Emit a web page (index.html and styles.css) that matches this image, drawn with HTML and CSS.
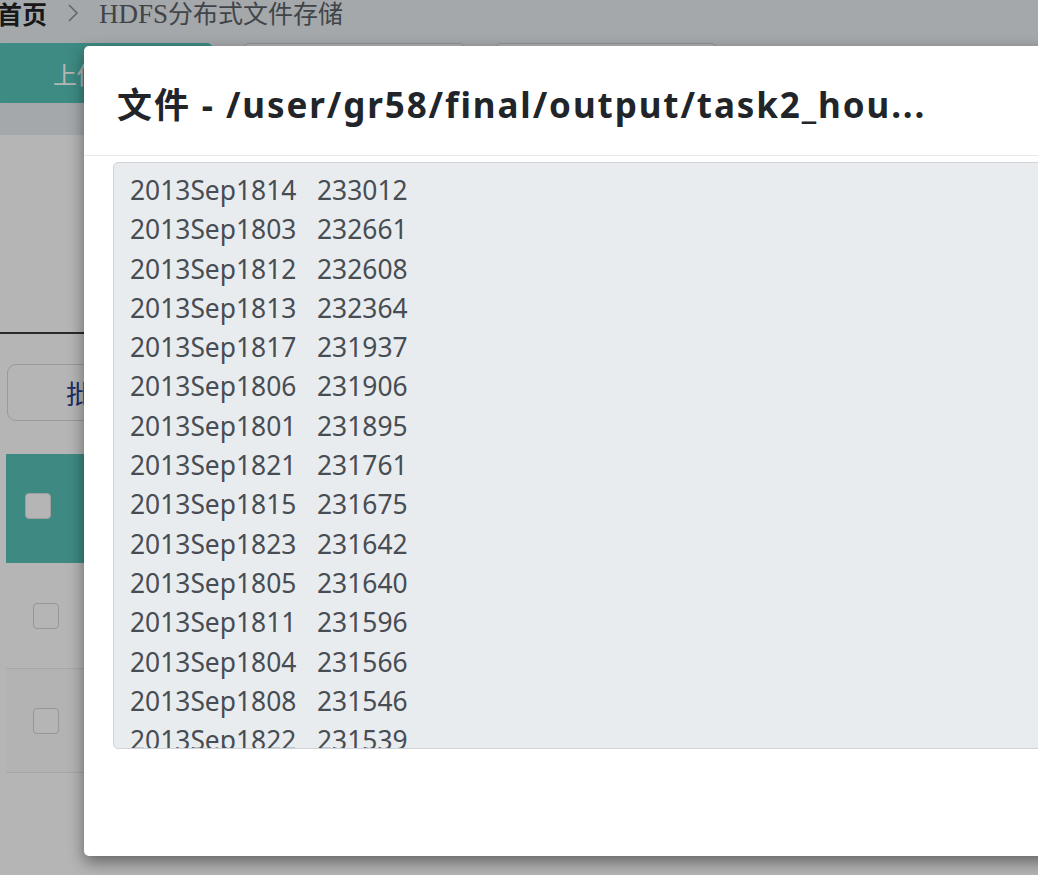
FILE: index.html
```html
<!DOCTYPE html>
<html lang="zh-CN">
<head>
<meta charset="utf-8">
<title>HDFS分布式文件存储</title>
<link rel="stylesheet" href="styles.css">
</head>
<body>
<div class="page">
  <div class="topband">
    <div class="crumbs">
      <span class="crumb-home">首页</span>
      <svg class="crumb-sep" width="12" height="20" viewBox="0 0 12 20"><polyline points="2,2 10,10 2,18" fill="none" stroke="#8a8f93" stroke-width="1.5"/></svg>
      <span class="crumb-cur"><span class="latin-serif">HDFS</span>分布式文件存储</span>
    </div>
    <div class="actions">
      <button class="btn btn-teal">上传文件</button>
      <button class="btn btn-plain">新建目录</button>
      <button class="btn btn-plain">刷新列表</button>
    </div>
  </div>
  <div class="divider"></div>
  <div class="tools">
    <button class="btn-batch">批量删除</button>
  </div>
  <div class="table">
    <div class="trow thead"><span class="cb cb-head"></span></div>
    <div class="trow"><span class="cb"></span></div>
    <div class="trow alt"><span class="cb"></span></div>
  </div>
</div>
<div class="backdrop"></div>
<div class="modal">
  <div class="modal-header">
    <h5 class="modal-title">文件 - /user/gr58/final/output/task2_hou...</h5>
  </div>
  <div class="modal-body">
    <div class="content">2013Sep1814	233012
2013Sep1803	232661
2013Sep1812	232608
2013Sep1813	232364
2013Sep1817	231937
2013Sep1806	231906
2013Sep1801	231895
2013Sep1821	231761
2013Sep1815	231675
2013Sep1823	231642
2013Sep1805	231640
2013Sep1811	231596
2013Sep1804	231566
2013Sep1808	231546
2013Sep1822	231539
2013Sep1802	231488
2013Sep1809	231410</div>
  </div>
</div>
</body>
</html>
```
FILE: styles.css
```css
* { box-sizing: border-box; }
html, body { margin: 0; padding: 0; }
body {
  width: 1038px;
  height: 875px;
  overflow: hidden;
  background: #ffffff;
  font-family: "Noto Sans", "Noto Sans CJK SC", sans-serif;
  position: relative;
}
.page { display: flex; flex-direction: column; }
.topband {
  background: #e8edf1;
  height: 135px;
  display: flex;
  flex-direction: column;
}
.crumbs {
  height: 30px;
  display: flex;
  align-items: center;
  margin-left: -3px;
  font-size: 25px;
  line-height: 30px;
  margin-top: -2px;
}
.crumb-home {
  font-family: "Noto Sans CJK SC", sans-serif;
  font-weight: 700;
  color: #222;
}
.crumb-sep { margin: 0 20px; }
.crumb-cur {
  font-family: "Noto Sans CJK SC", sans-serif;
  color: #5b6166;
  font-weight: 400;
}
.latin-serif { font-family: "Liberation Serif", serif; font-size: 27px; }
.actions {
  display: flex;
  gap: 30px;
  margin-top: 15px;
}
.btn {
  height: 60px;
  width: 222px;
  border-radius: 6px;
  font-size: 24px;
  font-family: "Noto Sans CJK SC", sans-serif;
  border: 1px solid #c9cdd2;
  background: #f5f7f9;
  color: #444;
  padding: 0;
}
.btn-teal {
  width: 213px;
  background: #57c4b9;
  border-color: #57c4b9;
  color: #ffffff;
  border-radius: 0 6px 6px 0;
  text-align: left;
  padding-left: 52px;
}
.divider {
  height: 2px;
  background: #3a3a3a;
  margin-top: 197px;
}
.tools { padding: 30px 0 0 7px; height: 120px; }
.btn-batch {
  width: 200px;
  height: 57px;
  border: 1.5px solid #d8d8d8;
  border-radius: 9px;
  background: #fff;
  font-family: "Noto Sans CJK SC", sans-serif;
  font-size: 26px;
  color: #2c3e8c;
  text-align: left;
  padding-left: 58px;
}
.table { margin-left: 6px; display: flex; flex-direction: column; }
.trow {
  height: 105px;
  display: flex;
  align-items: center;
  padding-left: 27px;
}
.trow.thead {
  height: 109px;
  background: #58c3b8;
  padding-left: 19px;
}
.trow.alt {
  background: #fdfdfd;
  border-top: 1px solid #eae9f3;
  border-bottom: 1px solid #eae9f3;
}
.cb {
  width: 26px;
  height: 26px;
  border: 1.5px solid #d4d4d4;
  border-radius: 4px;
  background: #fff;
}
.cb-head { border-color: #e0e0e0; margin-top: -5px; }
.backdrop {
  position: absolute;
  left: 0; top: 0;
  width: 1038px; height: 875px;
  background: rgba(0, 0, 0, 0.29);
}
.modal {
  position: absolute;
  left: 84px;
  top: 46px;
  width: 1040px;
  height: 810px;
  background: #fff;
  border-radius: 5px;
  box-shadow: 0 6px 16px rgba(0, 0, 0, 0.45);
  display: flex;
  flex-direction: column;
}
.modal-header {
  height: 110px;
  border-bottom: 1px solid #e6e8ea;
  display: flex;
  align-items: center;
  padding: 0 33px;
}
.modal-title {
  margin: 0;
  font-family: "Noto Sans", "Noto Sans CJK SC", sans-serif;
  font-weight: 700;
  font-size: 35px;
  letter-spacing: 1.9px;
  color: #212529;
  line-height: 1.2;
  white-space: nowrap;
  padding-top: 8px;
}
.modal-body { padding: 6px 0 0 29px; }
.content {
  height: 587px;
  overflow: hidden;
  background: #e9ecef;
  border: 1px solid #ced4da;
  border-radius: 5px;
  padding: 8px 16px;
  white-space: pre;
  tab-size: 187px;
  font-family: "Noto Sans", sans-serif;
  font-size: 26.4px;
  line-height: 39.3px;
  color: #474d53;
}
```
